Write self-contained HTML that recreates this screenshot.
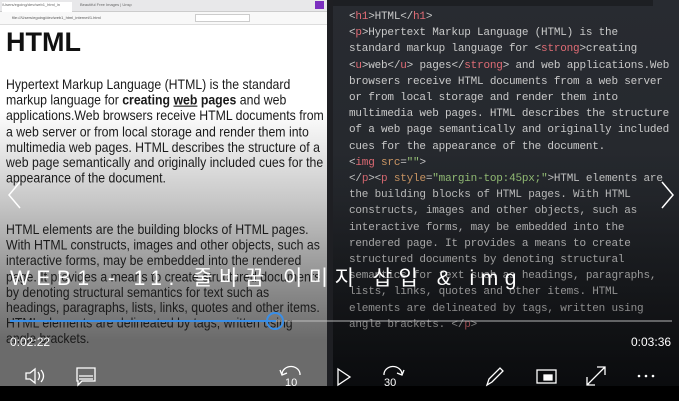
<!DOCTYPE html>
<html><head><meta charset="utf-8"><style>
*{margin:0;padding:0;box-sizing:border-box}
body{width:679px;height:401px;overflow:hidden;background:#000;position:relative;font-family:"Liberation Sans",sans-serif}
#left{position:absolute;left:0;top:0;width:327px;height:386px;background:linear-gradient(#fff 0,#fff 110px,#c8c8c8 200px,#8a8a8a 290px,#6b6b6b 340px,#6b6b6b 386px);overflow:hidden}
#strip{position:absolute;left:327px;top:0;width:6px;height:386px;background:#1e1f23}
#right{position:absolute;left:333px;top:0;width:346px;height:386px;background:linear-gradient(#282b31 0,#25282d 200px,#1a1c20 320px,#131519 386px);overflow:hidden}
.tabs{position:absolute;left:0;top:0;width:327px;height:12px;background:#e8e8ea;border-bottom:1px solid #ccc}
.url{position:absolute;left:0;top:12px;width:327px;height:13px;background:#f8f8f8;border-bottom:1px solid #ddd}
.h1{position:absolute;left:6px;top:27px;font-size:27px;font-weight:bold;color:#111}
.ptxt{position:absolute;left:6px;font-size:12.3px;line-height:15.6px;color:#1a1a1a;white-space:nowrap;transform:scaleY(1.1);transform-origin:0 0}
pre{position:absolute;left:16px;top:9px;font-family:"Liberation Mono",monospace;font-size:11px;line-height:16.2px;color:#c9c9c9;letter-spacing:-0.2px}
.t{color:#e06c75}.s{color:#98c379}.a{color:#d19a66}
.ov{position:absolute;left:333px;top:150px;width:346px;height:236px;background:linear-gradient(rgba(0,0,0,0),rgba(0,0,0,0.45))}
.title{position:absolute;left:10px;top:262px;color:#fff;font-size:21px;font-family:"Liberation Sans","Noto Sans CJK KR",sans-serif;letter-spacing:6.5px;white-space:nowrap}
.bar{position:absolute;left:10px;top:320px;width:662px;height:2px;background:rgba(200,200,200,.45)}
.prog{position:absolute;left:10px;top:320px;width:266px;height:2px;background:#3a8ee6}
.knob{position:absolute;left:266px;top:312px;width:18px;height:18px;border:2px solid #3a8ee6;border-radius:50%}
.tm{position:absolute;top:335px;color:#fff;font-size:12px}
svg{position:absolute}
</style></head><body>
<div id="left">
<div class="tabs"><div style="position:absolute;left:2px;top:2px;width:70px;height:10px;background:#fff;font-size:4px;color:#666">/Users/egoing/dev/web1_html_in</div><div style="position:absolute;left:80px;top:2px;font-size:4px;color:#666">Beautiful Free Images | Unsp</div><div style="position:absolute;left:315px;top:1px;width:9px;height:8px;background:#7b2fbf"></div></div>
<div class="url"><div style="position:absolute;left:12px;top:3px;font-size:4px;color:#555">file:///Users/egoing/dev/web1_html_internet/1.html</div><div style="position:absolute;left:195px;top:2px;width:55px;height:8px;border:1px solid #ccc;background:#fff"></div></div>
<div class="h1">HTML</div>
<div class="ptxt" style="top:77px;line-height:14.2px">Hypertext Markup Language (HTML) is the standard<br>markup language for <b>creating <u>web</u> pages</b> and web<br>applications.Web browsers receive HTML documents from<br>a web server or from local storage and render them into<br>multimedia web pages. HTML describes the structure of a<br>web page semantically and originally included cues for the<br>appearance of the document.</div>
<div class="ptxt" style="top:222px;line-height:14.2px">HTML elements are the building blocks of HTML pages.<br>With HTML constructs, images and other objects, such as<br>interactive forms, may be embedded into the rendered<br>page. It provides a means to create structured documents<br>by denoting structural semantics for text such as<br>headings, paragraphs, lists, links, quotes and other items.<br>HTML elements are delineated by tags, written using<br>angle brackets.</div>
</div>
<div id="strip"></div>
<div id="right">
<div style="position:absolute;left:0;top:0;width:320px;height:6px;background:#1d1f23"></div>
<pre>&lt;<span class="t">h1</span>&gt;HTML&lt;/<span class="t">h1</span>&gt;
&lt;<span class="t">p</span>&gt;Hypertext Markup Language (HTML) is the
standard markup language for &lt;<span class="t">strong</span>&gt;creating
&lt;<span class="t">u</span>&gt;web&lt;/<span class="t">u</span>&gt; pages&lt;/<span class="t">strong</span>&gt; and web applications.Web
browsers receive HTML documents from a web server
or from local storage and render them into
multimedia web pages. HTML describes the structure
of a web page semantically and originally included
cues for the appearance of the document.
&lt;<span class="t">img</span> <span class="a">src</span>=<span class="s">""</span>&gt;
&lt;/<span class="t">p</span>&gt;&lt;<span class="t">p</span> <span class="a">style</span>=<span class="s">"margin-top:45px;"</span>&gt;HTML elements are
the building blocks of HTML pages. With HTML
constructs, images and other objects, such as
interactive forms, may be embedded into the
rendered page. It provides a means to create
structured documents by denoting structural
semantics for text such as headings, paragraphs,
lists, links, quotes and other items. HTML
elements are delineated by tags, written using
angle brackets. &lt;/<span class="t">p</span>&gt;</pre>
</div>
<div class="ov"></div>
<svg style="left:6px;top:180px" width="16" height="30"><path d="M14 2 L3 15 L14 28" fill="none" stroke="#fff" stroke-width="1.5"/></svg>
<svg style="left:660px;top:180px" width="16" height="30"><path d="M2 2 L13 15 L2 28" fill="none" stroke="#fff" stroke-width="1.5"/></svg>
<div class="title">WEB1 - 11. 줄바꿈 이미지 삽입 &amp; img</div>
<div class="bar"></div><div class="prog"></div><div class="knob"></div>
<div class="tm" style="left:10px">0:02:22</div>
<div class="tm" style="left:631px">0:03:36</div>
<svg style="left:24px;top:366px" width="24" height="20" fill="none" stroke="#fff" stroke-width="1.3"><path d="M2 7h4l5-4v14l-5-4H2z"/><path d="M14 6q3 4 0 8M17 4q5 6 0 12"/></svg>
<svg style="left:75px;top:366px" width="22" height="22" fill="none" stroke="#fff" stroke-width="1.3"><path d="M2 2h18v13H7l-4 4v-4H2z"/><path d="M4 10h14M4 13h14"/></svg>
<svg style="left:278px;top:365px" width="26" height="22" fill="none" stroke="#fff" stroke-width="1.3"><path d="M4 9a9 8 0 0 1 18 1"/><path d="M2 5l2 5 5-2"/><text x="7" y="21" fill="#fff" stroke="none" font-size="11" font-family="Liberation Sans">10</text></svg>
<svg style="left:336px;top:367px" width="16" height="20" fill="none" stroke="#fff" stroke-width="1.3"><path d="M2 2l12 8-12 8z"/></svg>
<svg style="left:380px;top:365px" width="26" height="22" fill="none" stroke="#fff" stroke-width="1.3"><path d="M4 10a9 8 0 0 1 18-1"/><path d="M24 5l-2 5-5-2"/><text x="4" y="21" fill="#fff" stroke="none" font-size="11" font-family="Liberation Sans">30</text></svg>
<svg style="left:484px;top:364px" width="24" height="24" fill="none" stroke="#fff" stroke-width="1.3"><path d="M3 21l2-6L16 4l3 3L8 18z"/></svg>
<svg style="left:536px;top:369px" width="22" height="16" fill="none" stroke="#fff" stroke-width="1.3"><rect x="1" y="1" width="19" height="13"/><rect x="8" y="6" width="8" height="5" fill="#fff"/></svg>
<svg style="left:584px;top:364px" width="24" height="24" fill="none" stroke="#fff" stroke-width="1.3"><path d="M3 21L21 3M13 3h8v8M3 13v8h8"/></svg>
<svg style="left:636px;top:373px" width="20" height="6" fill="#fff"><circle cx="3" cy="3" r="1.3"/><circle cx="10" cy="3" r="1.3"/><circle cx="17" cy="3" r="1.3"/></svg>
</body></html>
